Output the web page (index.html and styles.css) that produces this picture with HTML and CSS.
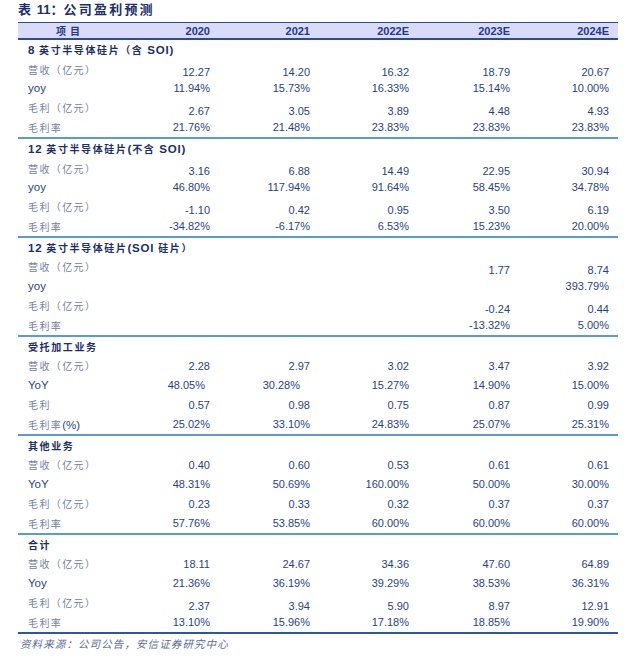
FILE: index.html
```html
<!DOCTYPE html>
<html lang="zh-CN">
<head>
<meta charset="utf-8">
<title>公司盈利预测</title>
<link rel="stylesheet" href="styles.css">
</head>
<body>
<div class="report">
  <h1 class="title"><span class="cap">表</span> <span class="num">11</span>：<span class="cap">公司盈利预测</span></h1>
  <div class="table">
    <div class="row head">
      <div class="lab">项目</div>
      <div class="v">2020</div><div class="v">2021</div><div class="v">2022E</div><div class="v">2023E</div><div class="v">2024E</div>
    </div>

    <section class="group">
      <div class="row sec"><div class="lab"><span class="lat">8</span> 英寸半导体硅片（含 <span class="lat">SOI)</span></div></div>
      <div class="row lo"><div class="lab cn">营收（亿元）</div><div class="v">12.27</div><div class="v">14.20</div><div class="v">16.32</div><div class="v">18.79</div><div class="v">20.67</div></div>
      <div class="row"><div class="lab en">yoy</div><div class="v">11.94%</div><div class="v">15.73%</div><div class="v">16.33%</div><div class="v">15.14%</div><div class="v">10.00%</div></div>
      <div class="row lo"><div class="lab cn">毛利（亿元）</div><div class="v">2.67</div><div class="v">3.05</div><div class="v">3.89</div><div class="v">4.48</div><div class="v">4.93</div></div>
      <div class="row"><div class="lab cn">毛利率</div><div class="v">21.76%</div><div class="v">21.48%</div><div class="v">23.83%</div><div class="v">23.83%</div><div class="v">23.83%</div></div>
    </section>

    <section class="group">
      <div class="row sec"><div class="lab"><span class="lat">12</span> 英寸半导体硅片<span class="lat">(</span>不含 <span class="lat">SOI)</span></div></div>
      <div class="row lo"><div class="lab cn">营收（亿元）</div><div class="v">3.16</div><div class="v">6.88</div><div class="v">14.49</div><div class="v">22.95</div><div class="v">30.94</div></div>
      <div class="row"><div class="lab en">yoy</div><div class="v">46.80%</div><div class="v">117.94%</div><div class="v">91.64%</div><div class="v">58.45%</div><div class="v">34.78%</div></div>
      <div class="row lo"><div class="lab cn">毛利（亿元）</div><div class="v">-1.10</div><div class="v">0.42</div><div class="v">0.95</div><div class="v">3.50</div><div class="v">6.19</div></div>
      <div class="row"><div class="lab cn">毛利率</div><div class="v">-34.82%</div><div class="v">-6.17%</div><div class="v">6.53%</div><div class="v">15.23%</div><div class="v">20.00%</div></div>
    </section>

    <section class="group">
      <div class="row sec"><div class="lab"><span class="lat">12</span> 英寸半导体硅片<span class="lat">(SOI</span> 硅片）</div></div>
      <div class="row lo"><div class="lab cn">营收（亿元）</div><div class="v"></div><div class="v"></div><div class="v"></div><div class="v">1.77</div><div class="v">8.74</div></div>
      <div class="row"><div class="lab en">yoy</div><div class="v"></div><div class="v"></div><div class="v"></div><div class="v"></div><div class="v">393.79%</div></div>
      <div class="row lo"><div class="lab cn">毛利（亿元）</div><div class="v"></div><div class="v"></div><div class="v"></div><div class="v">-0.24</div><div class="v">0.44</div></div>
      <div class="row"><div class="lab cn">毛利率</div><div class="v"></div><div class="v"></div><div class="v"></div><div class="v">-13.32%</div><div class="v">5.00%</div></div>
    </section>

    <section class="group">
      <div class="row sec"><div class="lab">受托加工业务</div></div>
      <div class="row"><div class="lab cn">营收（亿元）</div><div class="v">2.28</div><div class="v">2.97</div><div class="v">3.02</div><div class="v">3.47</div><div class="v">3.92</div></div>
      <div class="row"><div class="lab en">YoY</div><div class="v off1">48.05%</div><div class="v off2">30.28%</div><div class="v">15.27%</div><div class="v">14.90%</div><div class="v">15.00%</div></div>
      <div class="row"><div class="lab cn">毛利</div><div class="v">0.57</div><div class="v">0.98</div><div class="v">0.75</div><div class="v">0.87</div><div class="v">0.99</div></div>
      <div class="row"><div class="lab cn">毛利率<span class="pct">(%)</span></div><div class="v">25.02%</div><div class="v">33.10%</div><div class="v">24.83%</div><div class="v">25.07%</div><div class="v">25.31%</div></div>
    </section>

    <section class="group">
      <div class="row sec"><div class="lab">其他业务</div></div>
      <div class="row"><div class="lab cn">营收（亿元）</div><div class="v">0.40</div><div class="v">0.60</div><div class="v">0.53</div><div class="v">0.61</div><div class="v">0.61</div></div>
      <div class="row"><div class="lab en">YoY</div><div class="v">48.31%</div><div class="v">50.69%</div><div class="v">160.00%</div><div class="v">50.00%</div><div class="v">30.00%</div></div>
      <div class="row"><div class="lab cn">毛利（亿元）</div><div class="v">0.23</div><div class="v">0.33</div><div class="v">0.32</div><div class="v">0.37</div><div class="v">0.37</div></div>
      <div class="row"><div class="lab cn">毛利率</div><div class="v">57.76%</div><div class="v">53.85%</div><div class="v">60.00%</div><div class="v">60.00%</div><div class="v">60.00%</div></div>
    </section>

    <section class="group last">
      <div class="row sec"><div class="lab">合计</div></div>
      <div class="row"><div class="lab cn">营收（亿元）</div><div class="v">18.11</div><div class="v">24.67</div><div class="v">34.36</div><div class="v">47.60</div><div class="v">64.89</div></div>
      <div class="row"><div class="lab en">Yoy</div><div class="v">21.36%</div><div class="v">36.19%</div><div class="v">39.29%</div><div class="v">38.53%</div><div class="v">36.31%</div></div>
      <div class="row lo"><div class="lab cn">毛利（亿元）</div><div class="v">2.37</div><div class="v">3.94</div><div class="v">5.90</div><div class="v">8.97</div><div class="v">12.91</div></div>
      <div class="row"><div class="lab cn">毛利率</div><div class="v">13.10%</div><div class="v">15.96%</div><div class="v">17.18%</div><div class="v">18.85%</div><div class="v">19.90%</div></div>
    </section>
  </div>
  <p class="source">资料来源：公司公告，安信证券研究中心</p>
</div>
</body>
</html>
```

FILE: styles.css
```css
* { box-sizing: border-box; }

body {
  margin: 0;
  background: #ffffff;
  font-family: "Liberation Sans", "Noto Sans CJK SC", sans-serif;
  color: #1f3f8f;
}

.report {
  padding: 0 22px 0 18px;
}

.title {
  margin: 0 0 2px;
  height: 20px;
  line-height: 20px;
  font-size: 13px;
  font-weight: 700;
  color: #1b2f6b;
}
.title .cap { letter-spacing: 2.2px; }
.title .num { font-family: "Liberation Sans", sans-serif; }

.table {
  display: flex;
  flex-direction: column;
}

.row {
  display: grid;
  grid-template-columns: 100px 92px 100px 99px 101px 99px 9px;
  align-items: center;
  height: 19.4px;
  font-size: 11px;
}

.v { text-align: right; white-space: nowrap; }

.row.lo .v { margin-top: 6px; }

.off1 { padding-right: 5px; }
.off2 { padding-right: 10px; }

.head {
  height: 18px;
  background: #d9dbf8;
  border-top: 1px solid #2b4a9a;
  border-bottom: 2px solid #2b4a9a;
  font-weight: 700;
  color: #1f3a8a;
}
.head .lab {
  text-align: center;
  font-family: "Noto Sans CJK SC", sans-serif;
  font-size: 10px;
  letter-spacing: 4px;
  padding-left: 4px;
}

.group {
  display: flex;
  flex-direction: column;
  border-bottom: 2px solid #5b9bd5;
}
.group.last { border-bottom-color: #2f55a4; }

.lab {
  padding-left: 10px;
  white-space: nowrap;
}

.sec .lab {
  grid-column: 1 / -1;
  font-family: "Noto Sans CJK SC", sans-serif;
  font-weight: 700;
  font-size: 10px;
  letter-spacing: 1.6px;
  color: #1b2f6b;
}
.sec .lat {
  font-family: "Liberation Sans", sans-serif;
  font-size: 11.5px;
  letter-spacing: 0.8px;
}

.lab.cn {
  font-family: "Noto Sans CJK SC", sans-serif;
  font-size: 10px;
  letter-spacing: 1.4px;
  color: #7281a8;
}
.lab.cn .pct {
  font-family: "Liberation Sans", sans-serif;
  font-size: 11.5px;
  letter-spacing: 0;
  color: #1f3f8f;
}

.lab.en {
  font-size: 11.5px;
  color: #1f3f8f;
}

.source {
  margin: 2px 0 0;
  padding-left: 2px;
  line-height: 16px;
  font-family: "Noto Sans CJK SC", sans-serif;
  font-size: 10.5px;
  font-style: italic;
  letter-spacing: 1.1px;
  color: #5a6a9a;
}
```
